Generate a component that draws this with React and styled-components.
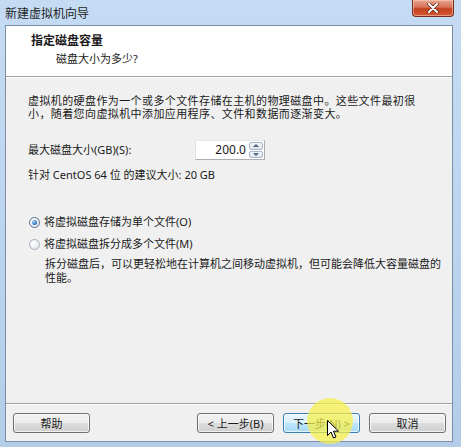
import React from "react";
import styled, { createGlobalStyle } from "styled-components";

const GlobalStyle = createGlobalStyle`
  html, body {
    margin: 0;
    padding: 0;
    background: #b9d1ea;
  }
  body {
    font-family: "Noto Sans", "Noto Sans CJK SC", sans-serif;
    font-size: 11px;
    color: #1a1a1a;
  }
`;

const Frame = styled.div`
  position: relative;
  width: 461px;
  height: 447px;
  box-sizing: border-box;
  padding: 0 8px 5px 5px;
  display: flex;
  flex-direction: column;
  background: linear-gradient(180deg, #c4dbf3 0%, #bed6ef 40%, #b3cde9 100%);
  overflow: hidden;
`;

const TitleBar = styled.div`
  height: 25px;
  display: flex;
  align-items: flex-start;
  justify-content: space-between;
  margin-right: -1px;
`;

const Title = styled.span`
  line-height: 27px;
  font-size: 12px;
  color: #1e1e1e;
`;

const CloseButton = styled.div`
  width: 42px;
  height: 17px;
  box-sizing: border-box;
  border: 1px solid #7a2d1c;
  border-top: none;
  border-radius: 0 0 4px 4px;
  background: linear-gradient(180deg, #e9a58f 0%, #d7715a 45%, #c2401f 55%, #d45a36 100%);
  box-shadow: inset 0 0 0 1px rgba(255, 220, 200, 0.5);
  display: flex;
  align-items: center;
  justify-content: center;
`;

const Client = styled.div`
  flex: 1;
  display: flex;
  flex-direction: column;
  background: #f0f0f0;
  border: 1px solid #7b8ea5;
`;

const Header = styled.div`
  height: 51px;
  box-sizing: border-box;
  background: #ffffff;
  border-bottom: 1px solid #a0a0a0;
  box-shadow: 0 1px 0 #ffffff;
  padding: 8px 0 0 25px;
  display: flex;
  flex-direction: column;
  gap: 4px;
`;

const HeaderTitle = styled.div`
  font-weight: bold;
  font-size: 12px;
  line-height: 14px;
`;

const HeaderSub = styled.div`
  line-height: 14px;
  padding-left: 25px;
`;

const Body = styled.div`
  flex: 1;
  padding: 17px 0 0 22px;
  display: flex;
  flex-direction: column;
`;

const Paragraph = styled.p`
  margin: 0;
  white-space: nowrap;
  line-height: ${(p) => p.$lh || 13}px;
  letter-spacing: ${(p) => p.$ls || 0}px;
  padding-left: ${(p) => p.$indent || 0}px;
  margin-top: ${(p) => p.$top || 0}px;
`;

const SizeRow = styled.div`
  display: flex;
  align-items: center;
  margin-top: 20px;
`;

const SizeLabel = styled.span`
  width: 167px;
  line-height: 14px;
`;

const Spin = styled.div`
  display: flex;
  height: 20px;
  width: 70px;
  box-sizing: border-box;
  border: 1px solid #abadb3;
  border-top-color: #e3e9ef;
  border-left-color: #e2e3ea;
  background: #ffffff;
`;

const SpinValue = styled.div`
  flex: 1;
  text-align: right;
  padding-right: 3px;
  font-size: 12px;
  line-height: 18px;
`;

const SpinButtons = styled.div`
  width: 14px;
  display: flex;
  flex-direction: column;
  gap: 1px;
  padding: 1px 1px 1px 0;
`;

const SpinHalf = styled.div`
  flex: 1;
  border: 1px solid #a9b6c6;
  border-radius: 2px;
  background: linear-gradient(180deg, #f4f6f9, #dfe5ec);
  display: flex;
  align-items: center;
  justify-content: center;
`;

const Arrow = styled.span`
  width: 0;
  height: 0;
  border-left: 3px solid transparent;
  border-right: 3px solid transparent;
  ${(p) =>
    p.$up
      ? "border-bottom: 3px solid #4d6185;"
      : "border-top: 3px solid #4d6185;"}
`;

const RadioRow = styled.label`
  display: flex;
  align-items: center;
  gap: 4px;
  line-height: 14px;
  margin-top: ${(p) => p.$top}px;
  padding-left: 1px;
`;

const RadioDot = styled.span`
  width: 11px;
  height: 11px;
  box-sizing: border-box;
  border-radius: 50%;
  border: 1px solid ${(p) => (p.$checked ? "#5a6f8c" : "#a8b0bb")};
  background: radial-gradient(circle at 40% 35%, #ffffff 0%, #e6e9ee 70%, #d4d8de 100%);
  display: flex;
  align-items: center;
  justify-content: center;
  &::after {
    content: "";
    width: 5px;
    height: 5px;
    border-radius: 50%;
    display: ${(p) => (p.$checked ? "block" : "none")};
    background: radial-gradient(circle at 35% 35%, #a9d8ff 0%, #2a6bb8 70%, #1b4f95 100%);
  }
`;

const Footer = styled.div`
  border-top: 1px solid #a0a0a0;
  box-shadow: inset 0 1px 0 #ffffff;
  padding: 9px 6px 8px 7px;
  display: flex;
  align-items: center;
`;

const ButtonGroup = styled.div`
  margin-left: auto;
  display: flex;
  gap: 9px;
`;

const Button = styled.button`
  width: 77px;
  height: 20px;
  box-sizing: border-box;
  padding: 0;
  font-family: inherit;
  font-size: 11px;
  color: #1a1a1a;
  border-radius: 3px;
  border: 1px solid ${(p) => (p.$focused ? "#3c7fb1" : "#707070")};
  background: ${(p) =>
    p.$focused
      ? "linear-gradient(180deg, #eaf6fd 0%, #d9f0fc 50%, #bee6fd 51%, #a7d9f5 100%)"
      : "linear-gradient(180deg, #f2f2f2 0%, #ebebeb 50%, #dddddd 51%, #cfcfcf 100%)"};
  box-shadow: inset 0 0 0 1px rgba(255, 255, 255, 0.7);
`;

const Highlight = styled.div`
  position: absolute;
  left: 307px;
  top: 398px;
  width: 46px;
  height: 46px;
  border-radius: 50%;
  background: rgba(246, 240, 70, 0.72);
  pointer-events: none;
`;

const Cursor = styled.svg`
  position: absolute;
  left: 327px;
  top: 420px;
  pointer-events: none;
`;

export default function App() {
  return (
    <>
      <GlobalStyle />
      <Frame>
        <TitleBar>
          <Title>新建虚拟机向导</Title>
          <CloseButton>
            <svg width="12" height="10" viewBox="0 0 12 10">
              <path d="M2 1 L10 9 M10 1 L2 9" stroke="#5a2414" strokeWidth="3.4" strokeLinecap="round" />
              <path d="M2 1 L10 9 M10 1 L2 9" stroke="#ffffff" strokeWidth="2" strokeLinecap="round" />
            </svg>
          </CloseButton>
        </TitleBar>
        <Client>
          <Header>
            <HeaderTitle>指定磁盘容量</HeaderTitle>
            <HeaderSub>磁盘大小为多少?</HeaderSub>
          </Header>
          <Body>
            <Paragraph $lh={13} $ls={0.4}>
              虚拟机的硬盘作为一个或多个文件存储在主机的物理磁盘中。这些文件最初很
              <br />
              小，随着您向虚拟机中添加应用程序、文件和数据而逐渐变大。
            </Paragraph>
            <SizeRow>
              <SizeLabel>最大磁盘大小(GB)(S):</SizeLabel>
              <Spin>
                <SpinValue>200.0</SpinValue>
                <SpinButtons>
                  <SpinHalf>
                    <Arrow $up />
                  </SpinHalf>
                  <SpinHalf>
                    <Arrow />
                  </SpinHalf>
                </SpinButtons>
              </Spin>
            </SizeRow>
            <Paragraph $lh={14} $top={8}>
              针对 CentOS 64 位 的建议大小: 20 GB
            </Paragraph>
            <RadioRow $top={33}>
              <RadioDot $checked />
              将虚拟磁盘存储为单个文件(O)
            </RadioRow>
            <RadioRow $top={8}>
              <RadioDot />
              将虚拟磁盘拆分成多个文件(M)
            </RadioRow>
            <Paragraph $lh={14} $top={6} $indent={17}>
              拆分磁盘后，可以更轻松地在计算机之间移动虚拟机，但可能会降低大容量磁盘的
              <br />
              性能。
            </Paragraph>
          </Body>
          <Footer>
            <Button>帮助</Button>
            <ButtonGroup>
              <Button>&lt; 上一步(B)</Button>
              <Button $focused>下一步(N) &gt;</Button>
              <Button>取消</Button>
            </ButtonGroup>
          </Footer>
        </Client>
        <Highlight />
        <Cursor width="13" height="20" viewBox="0 0 13 20">
          <path
            d="M0.5 0.5 L0.5 15.5 L4 12 L6.5 18 L9 17 L6.5 11.2 L11.5 11.2 Z"
            fill="#ffffff"
            stroke="#000000"
            strokeWidth="1"
            strokeLinejoin="round"
          />
        </Cursor>
      </Frame>
    </>
  );
}
